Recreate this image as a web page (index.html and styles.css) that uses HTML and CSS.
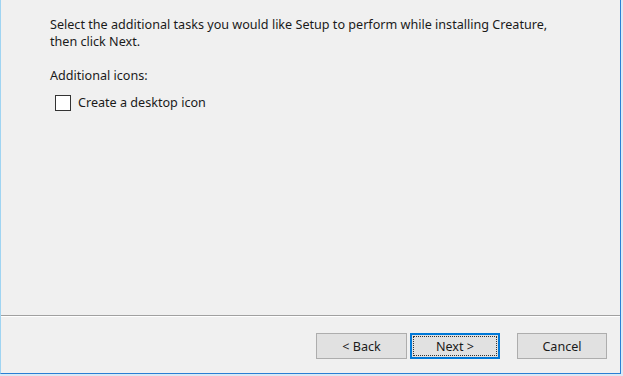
FILE: index.html
```html
<!DOCTYPE html>
<html lang="en">
<head>
    <meta charset="UTF-8">
    <title>Setup - Creature</title>
    <link rel="stylesheet" href="styles.css">
</head>
<body>
    <div class="window">
        <div class="page">
            <p class="intro">Select the additional tasks you would like Setup to perform while installing Creature,<br>then click Next.</p>

            <div class="group">
                <p class="group-title">Additional icons:</p>
                <label class="check">
                    <span class="box"></span>
                    <span>Create a desktop icon</span>
                </label>
            </div>
        </div>

        <div class="footer">
            <div class="button-row">
                <button class="btn btn-back">&lt; Back</button>
                <button class="btn btn-default"><span class="focus">Next &gt;</span></button>
                <button class="btn btn-cancel">Cancel</button>
            </div>
        </div>
    </div>
</body>
</html>
```

FILE: styles.css
```css
* {
    box-sizing: border-box;
    margin: 0;
    padding: 0;
}

body {
    width: 623px;
    height: 376px;
    background: #dbe9f5;
    font-family: 'Noto Sans', 'Open Sans', sans-serif;
    font-size: 12.6px;
    color: #1a1a1a;
    overflow: hidden;
}

.window {
    width: 621px;
    height: 374px;
    background: #f0f0f0;
    border-left: 1px solid #9fd4f2;
    border-right: 1px solid #2a7fd4;
    border-bottom: 1px solid #2a7fd4;
    display: flex;
    flex-direction: column;
}

.page {
    flex: 1;
    padding: 16px 0 0 49px;
}

.intro {
    line-height: 17px;
    margin-bottom: 17px;
}

.group-title {
    line-height: 17px;
    margin-bottom: 10px;
}

.check {
    display: flex;
    align-items: center;
    gap: 7px;
    padding-left: 5px;
}

.box {
    width: 16px;
    height: 16px;
    border: 1px solid #333;
    background: #fff;
}

.footer {
    height: 58px;
    border-top: 1px solid #a0a0a0;
    box-shadow: inset 0 1px 0 #fff;
    padding: 17px 13px 0 0;
}

.button-row {
    display: flex;
    justify-content: flex-end;
    gap: 3px;
}

.btn {
    width: 90px;
    height: 26px;
    background: #e1e1e1;
    border: 1px solid #adadad;
    font-family: inherit;
    font-size: 12.6px;
    color: #1a1a1a;
    display: flex;
    align-items: center;
    justify-content: center;
}

.btn-back {
    width: 91px;
}

.btn-default {
    border: 2px solid #0078d7;
    padding: 1px;
}

.focus {
    width: 100%;
    height: 100%;
    border: 1px dotted #333;
    display: flex;
    align-items: center;
    justify-content: center;
}

.btn-cancel {
    margin-left: 14px;
}
```
